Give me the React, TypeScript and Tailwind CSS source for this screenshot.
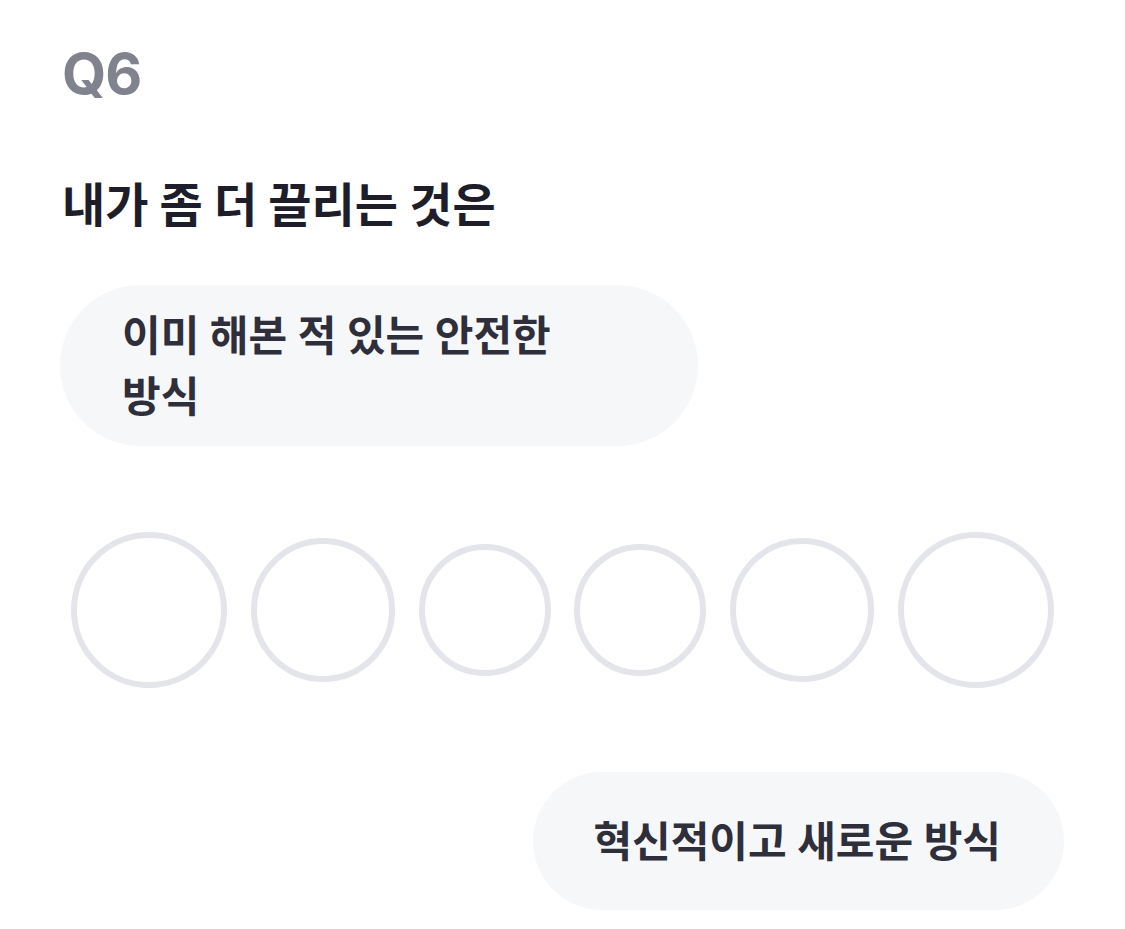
import React from "react";

const sizes = [156, 144, 132, 132, 144, 156];

function Circle({ size }: { size: number }) {
  return (
    <div
      className="rounded-full border-[6px] border-[#e4e5ea] bg-white shrink-0"
      style={{ width: size, height: size }}
    />
  );
}

export default function App() {
  return (
    <div
      className="w-[1125px] h-[929px] bg-white px-[60px] pt-[45px]"
      style={{ fontFamily: 'Inter, "Noto Sans CJK KR", sans-serif' }}
    >
      <p className="text-[57px] leading-none font-bold text-[#80828e] pl-[2px] tracking-[-1px]">Q6</p>

      <h1 className="mt-[73px] text-[47px] leading-[60px] font-bold text-[#1e1e2a] pl-[2px] break-keep">
        내가 좀 더 끌리는 것은
      </h1>

      <div className="mt-[50px] flex">
        <button className="w-[638px] h-[161px] rounded-full bg-[#f6f7f9] pl-[62px] pr-[62px] text-left">
          <span className="block max-w-[480px] text-[42px] leading-[61px] font-semibold text-[#2e2f3a] break-keep">
            이미 해본 적 있는 안전한 방식
          </span>
        </button>
      </div>

      <div className="mt-[86px] flex items-center justify-between px-[11px] h-[156px]">
        {sizes.map((s, i) => (
          <Circle key={i} size={s} />
        ))}
      </div>

      <div className="mt-[84px] flex justify-end pr-[1px]">
        <button className="h-[138px] rounded-full bg-[#f6f7f9] pl-[60px] pr-[63px] text-[42px] leading-[61px] font-semibold text-[#2e2f3a] break-keep">
          혁신적이고 새로운 방식
        </button>
      </div>
    </div>
  );
}
